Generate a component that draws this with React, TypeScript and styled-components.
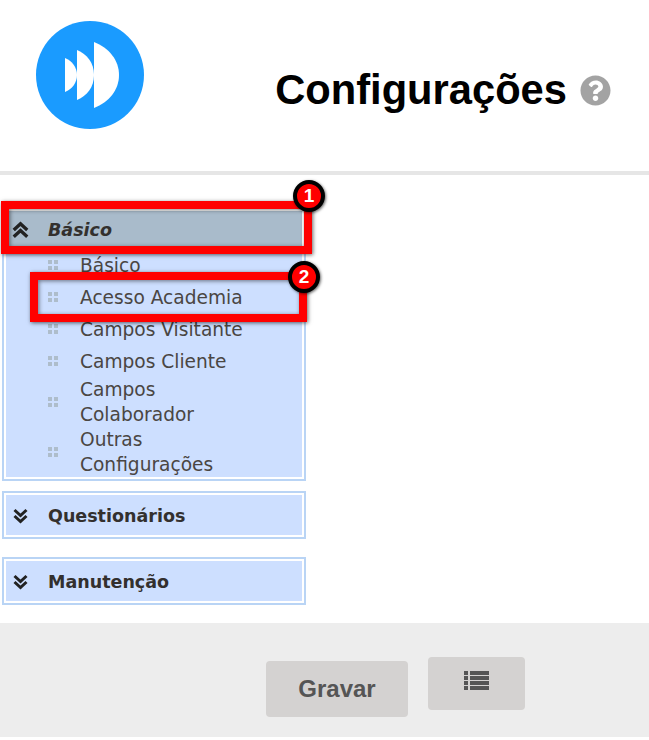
import React from 'react';
import styled, { createGlobalStyle } from 'styled-components';
import { FaQuestionCircle } from 'react-icons/fa';

const GlobalStyle = createGlobalStyle`
  html, body {
    margin: 0;
    padding: 0;
    background-color: #fff;
    font-family: "DejaVu Sans", Verdana, sans-serif;
  }
`;

const Page = styled.div`
  width: 649px;
  height: 737px;
  display: flex;
  flex-direction: column;
`;

const Header = styled.header`
  height: 150px;
  flex: none;
  padding: 21px 38px 0 36px;
  display: flex;
  align-items: flex-start;
  justify-content: space-between;
  border-bottom: 4px solid #e6e6e6;
`;

const TitleRow = styled.div`
  display: flex;
  align-items: center;
  gap: 13px;
  margin-top: 46px;
`;

const Title = styled.h1`
  margin: 0;
  font-family: "Liberation Sans", Arial, sans-serif;
  font-size: 41.7px;
  line-height: 46px;
  font-weight: 700;
  color: #000;
`;

const Sidebar = styled.nav`
  position: relative;
  flex: 1;
  padding: 32px 0 0 2px;
  display: flex;
  flex-direction: column;
  align-items: flex-start;
`;

const Panel = styled.section`
  width: 304px;
  box-sizing: border-box;
  border: 2px solid #b9d4f5;
  padding: 2px;
  background-color: #fff;
  margin-bottom: 18px;
  &:first-child {
    margin-bottom: 10px;
  }
`;

const PanelHeader = styled.div<{ $active?: boolean }>`
  height: ${(p) => (p.$active ? 38 : 40)}px;
  display: flex;
  align-items: center;
  box-sizing: border-box;
  padding: ${(p) => (p.$active ? '0 0 0 6px' : '2px 0 0 6px')};
  gap: 19px;
  background-color: ${(p) => (p.$active ? '#a9bbcb' : '#cddfff')};
  color: #33302e;
  font-size: 17.5px;
  font-weight: 700;
  font-style: ${(p) => (p.$active ? 'italic' : 'normal')};
`;

const ChevronSlot = styled.span`
  width: 17px;
  flex: none;
  display: flex;
  justify-content: center;
`;

const PanelBody = styled.ul`
  margin: 0;
  padding: 0;
  list-style: none;
  background-color: #cddfff;
`;

const Item = styled.li`
  display: flex;
  align-items: center;
  min-height: 32px;
  padding-left: 42px;
  gap: 21px;
  color: #4a4643;
  font-size: 18.6px;
  line-height: 25px;
`;

const ItemLabel = styled.span`
  width: 170px;
`;

const Overlay = styled.div<{ $left: number; $top: number; $width: number; $height: number }>`
  position: absolute;
  left: ${(p) => p.$left}px;
  top: ${(p) => p.$top}px;
  width: ${(p) => p.$width}px;
  height: ${(p) => p.$height}px;
  box-sizing: border-box;
  border: 8px solid #ff0000;
  box-shadow: 1px 1px 4px rgba(0, 0, 0, 0.6), inset 1px 1px 4px rgba(0, 0, 0, 0.5);
`;

const Badge = styled.div<{ $left: number; $top: number }>`
  position: absolute;
  left: ${(p) => p.$left}px;
  top: ${(p) => p.$top}px;
  width: 32px;
  height: 32px;
  box-sizing: border-box;
  border: 4px solid #000;
  border-radius: 50%;
  background-color: #ff0000;
  color: #fff;
  font-family: "Liberation Sans", Arial, sans-serif;
  font-size: 19px;
  font-weight: 700;
  line-height: 24px;
  text-align: center;
  box-shadow: 1px 1px 3px rgba(0, 0, 0, 0.6);
`;

const Footer = styled.footer`
  flex: none;
  height: 114px;
  box-sizing: border-box;
  padding-left: 266px;
  display: flex;
  align-items: flex-start;
  gap: 20px;
  background-color: #ededed;
`;

const Button = styled.button<{ $offset: number; $width: number; $height: number }>`
  margin: ${(p) => p.$offset}px 0 0;
  width: ${(p) => p.$width}px;
  height: ${(p) => p.$height}px;
  padding: 0;
  border: 0;
  border-radius: 4px;
  background-color: #d4d2d1;
  color: #555;
  font-family: "Liberation Sans", Arial, sans-serif;
  font-size: 24px;
  font-weight: 700;
`;

const IconSlot = styled.span`
  display: block;
  width: 25px;
  height: 19px;
  margin: -13px auto 0;
`;

const Logo = () => (
  <svg width="108" height="108" viewBox="0 0 108 108">
    <circle cx="54" cy="54" r="54" fill="#1a9bff" />
    <path d="M58 21 C73 27 83 39 83 54 C83 69 73 81 58 87 Z" fill="#fff" />
    <path d="M41 29 C51 33 58 42 58 54 C58 66 51 75 41 79 Z" fill="#fff" />
    <path d="M29 37 C36 40 41 46 41 54 C41 62 36 68 29 71 Z" fill="#fff" />
  </svg>
);

const DoubleChevron = ({ up }: { up?: boolean }) => (
  <svg width={up ? 17 : 15} height={up ? 18 : 16} viewBox="0 0 15 16">
    <g
      fill="none"
      stroke="#222"
      strokeWidth="3"
      transform={up ? undefined : 'rotate(180 7.5 8)'}
    >
      <path d="M1.5 8 L7.5 2.5 L13.5 8" />
      <path d="M1.5 14 L7.5 8.5 L13.5 14" />
    </g>
  </svg>
);

const Grip = () => (
  <svg width="11" height="11" viewBox="0 0 11 11" style={{ flex: 'none' }}>
    <g fill="#aebdcb">
      <rect x="0" y="0" width="4" height="4" />
      <rect x="6" y="0" width="4" height="4" />
      <rect x="0" y="6" width="4" height="4" />
      <rect x="6" y="6" width="4" height="4" />
    </g>
  </svg>
);

const ListIcon = () => (
  <svg width="25" height="19" viewBox="0 0 25 19">
    <g fill="#555">
      {[0, 5, 10, 15].map((y) => (
        <React.Fragment key={y}>
          <rect x="0" y={y} width="4" height="4" />
          <rect x="6" y={y} width="19" height="4" />
        </React.Fragment>
      ))}
    </g>
  </svg>
);

const items = ['Básico', 'Acesso Academia', 'Campos Visitante', 'Campos Cliente', 'Campos Colaborador', 'Outras Configurações'];

export default function App() {
  return (
    <Page>
      <GlobalStyle />
      <Header>
        <Logo />
        <TitleRow>
          <Title>Configurações</Title>
          <FaQuestionCircle size={31} color="#a3a3a3" />
        </TitleRow>
      </Header>
      <Sidebar>
        <Panel>
          <PanelHeader $active>
            <ChevronSlot>
              <DoubleChevron up />
            </ChevronSlot>
            Básico
          </PanelHeader>
          <PanelBody>
            {items.map((label) => (
              <Item key={label}>
                <Grip />
                <ItemLabel>{label}</ItemLabel>
              </Item>
            ))}
          </PanelBody>
        </Panel>
        <Panel>
          <PanelHeader>
            <ChevronSlot>
              <DoubleChevron />
            </ChevronSlot>
            Questionários
          </PanelHeader>
        </Panel>
        <Panel>
          <PanelHeader>
            <ChevronSlot>
              <DoubleChevron />
            </ChevronSlot>
            Manutenção
          </PanelHeader>
        </Panel>
        <Overlay $left={1} $top={26} $width={311} $height={53} />
        <Badge $left={293} $top={5}>1</Badge>
        <Overlay $left={30} $top={97} $width={277} $height={50} />
        <Badge $left={288} $top={86}>2</Badge>
      </Sidebar>
      <Footer>
        <Button $offset={38} $width={142} $height={56}>Gravar</Button>
        <Button $offset={34} $width={97} $height={53}>
          <IconSlot>
            <ListIcon />
          </IconSlot>
        </Button>
      </Footer>
    </Page>
  );
}
